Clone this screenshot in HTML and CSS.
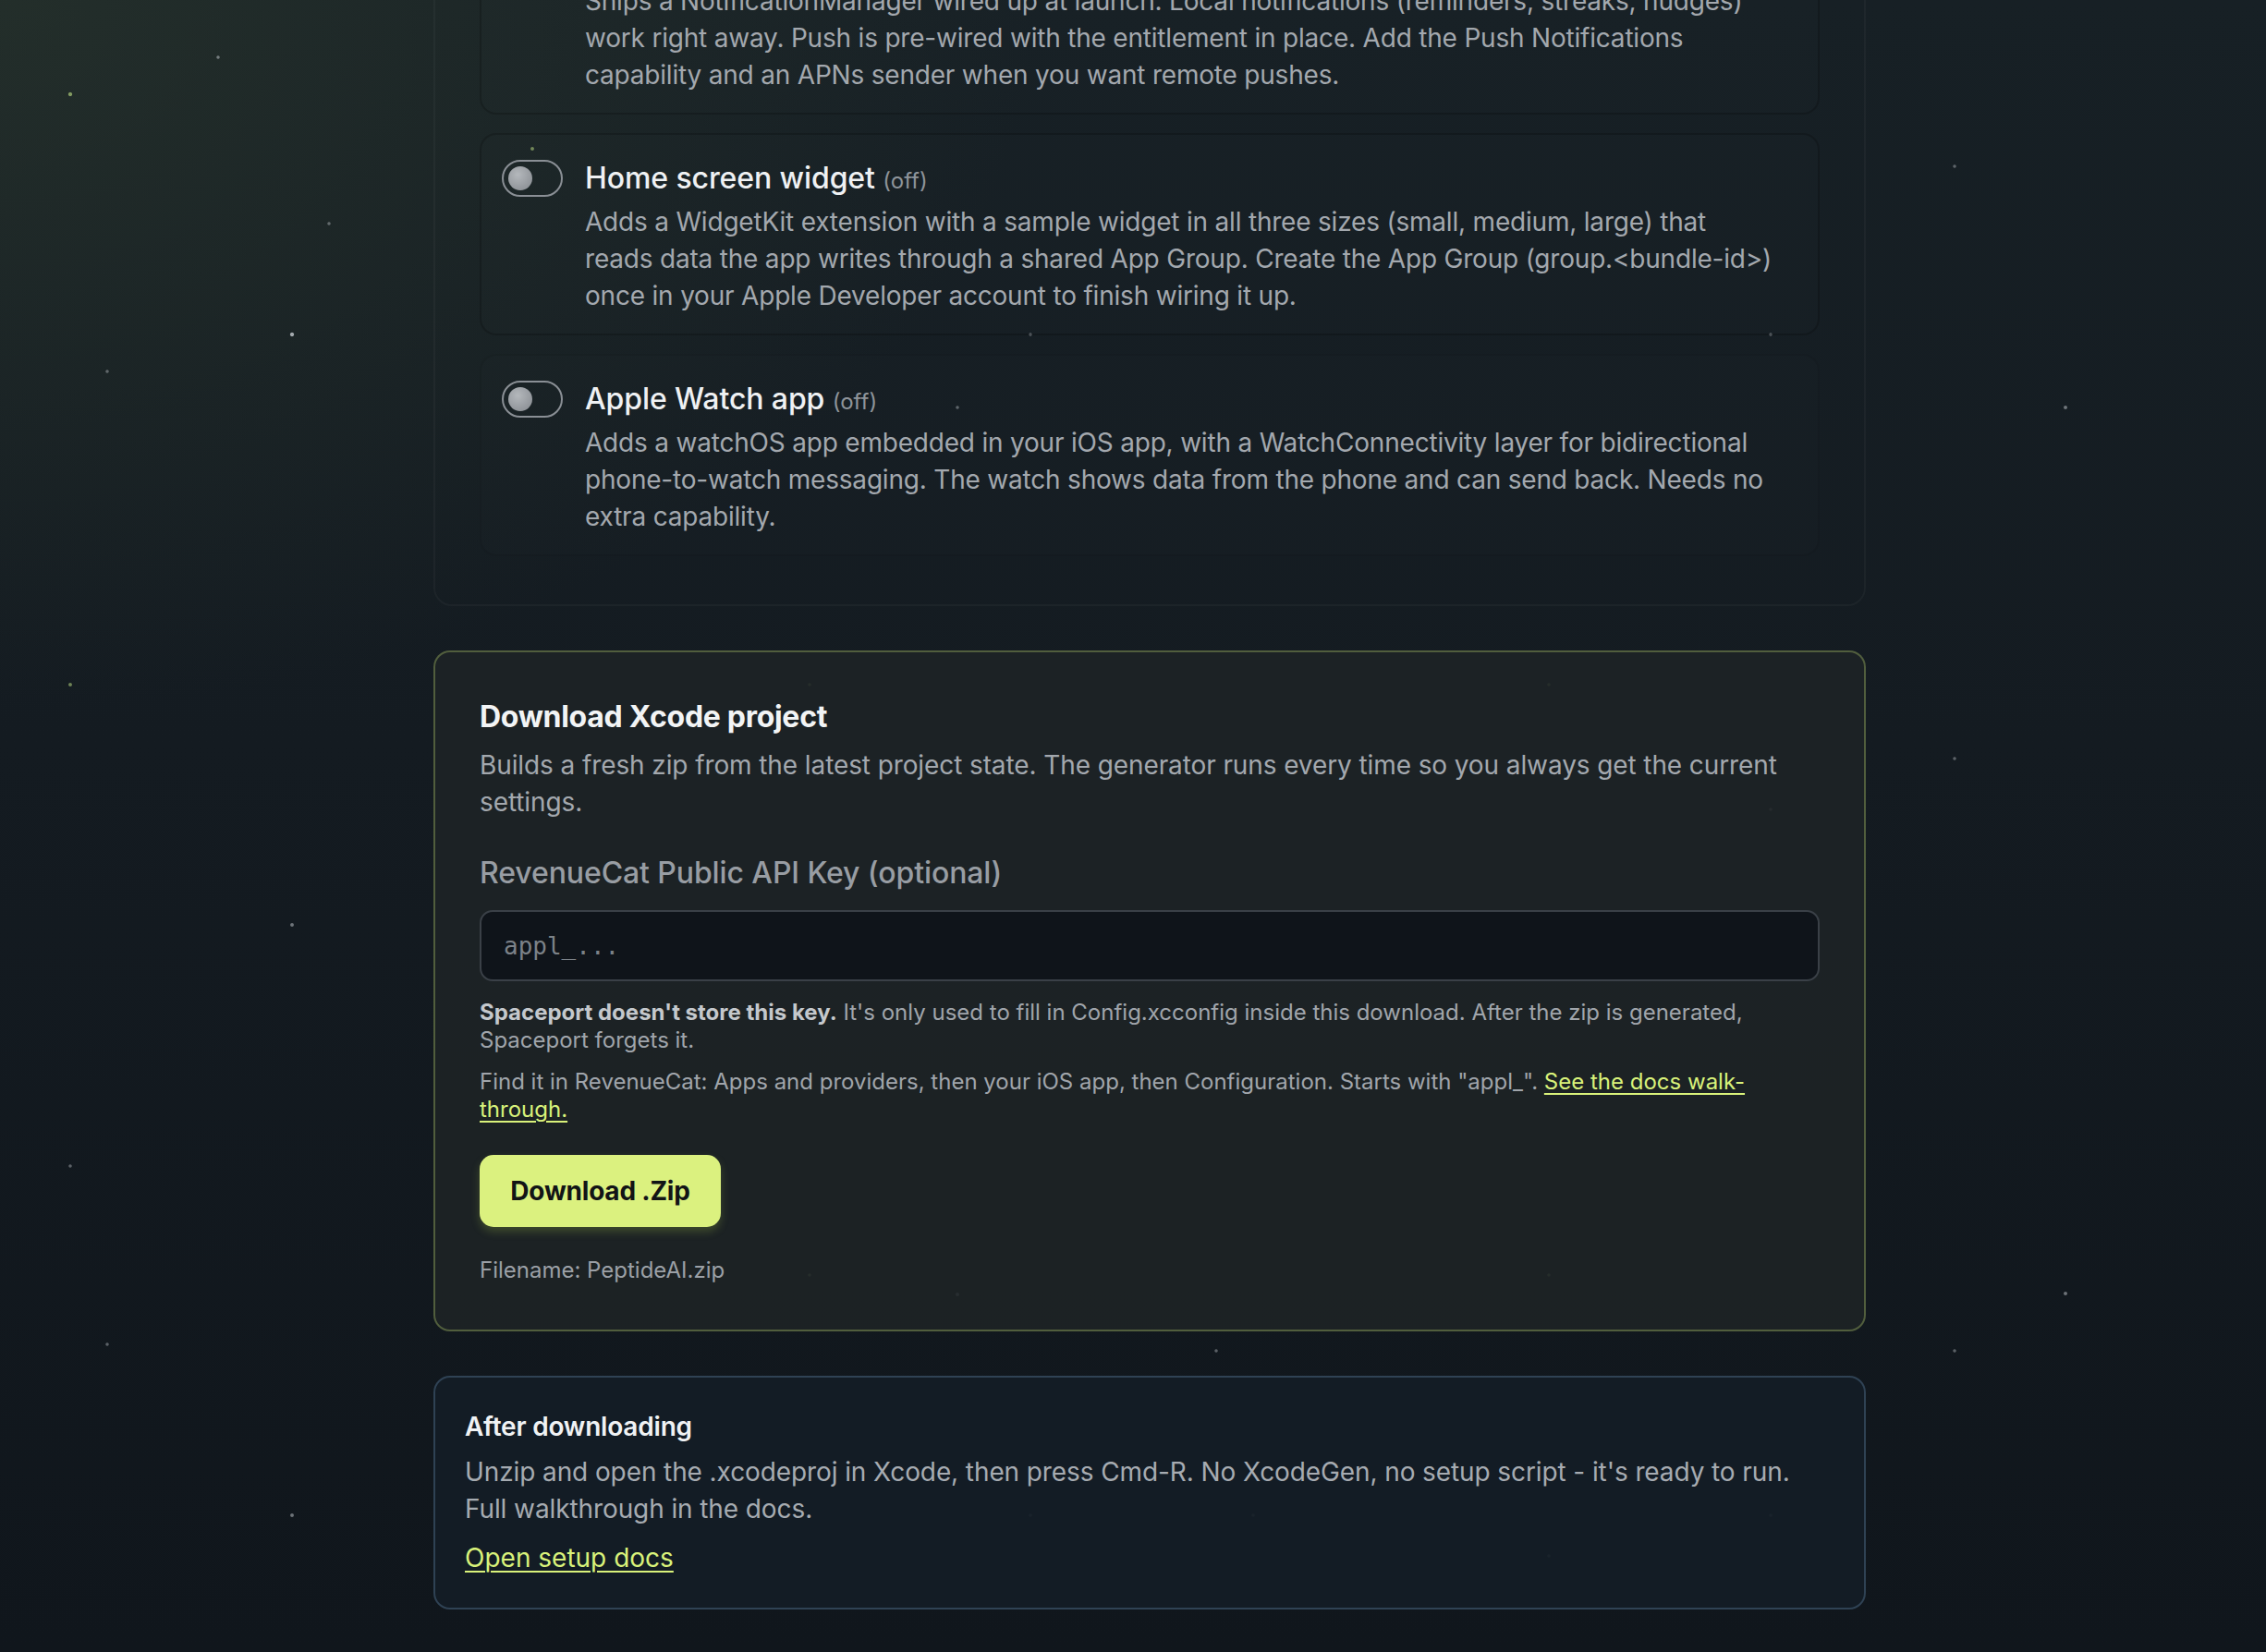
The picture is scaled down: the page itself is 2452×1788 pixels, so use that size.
FILE: index.html
```html
<!DOCTYPE html>
<html lang="en">
<head>
<meta charset="utf-8">
<title>Spaceport – Download</title>
<link rel="stylesheet" href="styles.css">
</head>
<body>
<main class="page">
  <section class="features">
    <div class="feature">
      <span class="toggle toggle-on"><span class="knob"></span></span>
      <div class="feature-body">
        <div class="feature-title">Notifications <span class="state">(on)</span></div>
        <p class="feature-desc">Ships a NotificationManager wired up at launch. Local notifications (reminders, streaks, nudges) work right away. Push is pre-wired with the entitlement in place. Add the Push Notifications capability and an APNs sender when you want remote pushes.</p>
      </div>
    </div>
    <div class="feature">
      <span class="toggle"><span class="knob"></span></span>
      <div class="feature-body">
        <div class="feature-title">Home screen widget <span class="state">(off)</span></div>
        <p class="feature-desc">Adds a WidgetKit extension with a sample widget in all three sizes (small, medium, large) that reads data the app writes through a shared App Group. Create the App Group (group.&lt;bundle-id&gt;) once in your Apple Developer account to finish wiring it up.</p>
      </div>
    </div>
    <div class="feature feature-plain">
      <span class="toggle"><span class="knob"></span></span>
      <div class="feature-body">
        <div class="feature-title">Apple Watch app <span class="state">(off)</span></div>
        <p class="feature-desc">Adds a watchOS app embedded in your iOS app, with a WatchConnectivity layer for bidirectional phone-to-watch messaging. The watch shows data from the phone and can send back. Needs no extra capability.</p>
      </div>
    </div>
  </section>

  <section class="download">
    <h2 class="download-title">Download Xcode project</h2>
    <p class="download-desc">Builds a fresh zip from the latest project state. The generator runs every time so you always get the current settings.</p>
    <label class="field-label" for="rc-key">RevenueCat Public API Key (optional)</label>
    <input class="field-input" id="rc-key" type="text" placeholder="appl_...">
    <p class="note"><strong>Spaceport doesn't store this key.</strong> It's only used to fill in Config.xcconfig inside this download. After the zip is generated, Spaceport forgets it.</p>
    <p class="note note-second">Find it in RevenueCat: Apps and providers, then your iOS app, then Configuration. Starts with "appl_". <a class="link" href="#">See the docs walk-through.</a></p>
    <button class="btn-download" type="button">Download .Zip</button>
    <p class="filename">Filename: PeptideAI.zip</p>
  </section>

  <section class="after">
    <h3 class="after-title">After downloading</h3>
    <p class="after-text">Unzip and open the .xcodeproj in Xcode, then press Cmd-R. No XcodeGen, no setup script - it's ready to run. Full walkthrough in the docs.</p>
    <a class="link after-link" href="#">Open setup docs</a>
  </section>
</main>
</body>
</html>
```

FILE: styles.css
```css
* { box-sizing: border-box; }

html, body {
  margin: 0;
  padding: 0;
  height: 100%;
}

body {
  overflow: hidden;
  font-family: "Inter", "Noto Sans", sans-serif;
  color: #eef0f2;
  background:
    radial-gradient(circle, rgba(170,200,120,0.7) 0 1.6px, transparent 2.6px) 73px 99px / 6px 6px no-repeat,
    radial-gradient(circle, rgba(200,205,210,0.5) 0 1.2px, transparent 2.2px) 233px 59px / 6px 6px no-repeat,
    radial-gradient(circle, rgba(220,225,230,0.7) 0 1.6px, transparent 2.6px) 313px 359px / 6px 6px no-repeat,
    radial-gradient(circle, rgba(200,205,210,0.4) 0 1.2px, transparent 2.2px) 113px 399px / 6px 6px no-repeat,
    radial-gradient(circle, rgba(200,205,210,0.4) 0 1.2px, transparent 2.2px) 353px 239px / 6px 6px no-repeat,
    radial-gradient(circle, rgba(170,200,120,0.6) 0 1.4px, transparent 2.4px) 73px 738px / 6px 6px no-repeat,
    radial-gradient(circle, rgba(200,205,210,0.5) 0 1.4px, transparent 2.4px) 313px 998px / 6px 6px no-repeat,
    radial-gradient(circle, rgba(200,205,210,0.4) 0 1.2px, transparent 2.2px) 73px 1259px / 6px 6px no-repeat,
    radial-gradient(circle, rgba(200,205,210,0.5) 0 1.4px, transparent 2.4px) 313px 1637px / 6px 6px no-repeat,
    radial-gradient(circle, rgba(200,205,210,0.4) 0 1.2px, transparent 2.2px) 113px 1452px / 6px 6px no-repeat,
    radial-gradient(circle, rgba(200,205,210,0.4) 0 1.2px, transparent 2.2px) 2112px 177px / 6px 6px no-repeat,
    radial-gradient(circle, rgba(200,205,210,0.4) 0 1.2px, transparent 2.2px) 1913px 359px / 6px 6px no-repeat,
    radial-gradient(circle, rgba(200,205,210,0.5) 0 1.4px, transparent 2.4px) 2232px 438px / 6px 6px no-repeat,
    radial-gradient(circle, rgba(200,205,210,0.4) 0 1.2px, transparent 2.2px) 2112px 818px / 6px 6px no-repeat,
    radial-gradient(circle, rgba(200,205,210,0.4) 0 1.2px, transparent 2.2px) 1913px 873px / 6px 6px no-repeat,
    radial-gradient(circle, rgba(200,205,210,0.5) 0 1.4px, transparent 2.4px) 2232px 1397px / 6px 6px no-repeat,
    radial-gradient(circle, rgba(200,205,210,0.4) 0 1.2px, transparent 2.2px) 2112px 1459px / 6px 6px no-repeat,
    radial-gradient(circle, rgba(200,205,210,0.4) 0 1.2px, transparent 2.2px) 1913px 1637px / 6px 6px no-repeat,
    radial-gradient(circle, rgba(170,200,120,0.6) 0 1.4px, transparent 2.4px) 573px 158px / 6px 6px no-repeat,
    radial-gradient(circle, rgba(200,205,210,0.4) 0 1.2px, transparent 2.2px) 1112px 359px / 6px 6px no-repeat,
    radial-gradient(circle, rgba(200,205,210,0.4) 0 1.2px, transparent 2.2px) 1033px 438px / 6px 6px no-repeat,
    radial-gradient(circle, rgba(170,200,120,0.5) 0 1.2px, transparent 2.2px) 873px 738px / 6px 6px no-repeat,
    radial-gradient(circle, rgba(170,200,120,0.5) 0 1.2px, transparent 2.2px) 1673px 738px / 6px 6px no-repeat,
    radial-gradient(circle, rgba(170,200,120,0.5) 0 1.2px, transparent 2.2px) 873px 1377px / 6px 6px no-repeat,
    radial-gradient(circle, rgba(200,205,210,0.5) 0 1.4px, transparent 2.4px) 1033px 1398px / 6px 6px no-repeat,
    radial-gradient(circle, rgba(170,200,120,0.5) 0 1.2px, transparent 2.2px) 1673px 1377px / 6px 6px no-repeat,
    radial-gradient(circle, rgba(200,205,210,0.4) 0 1.2px, transparent 2.2px) 1313px 1459px / 6px 6px no-repeat,
    radial-gradient(circle, rgba(200,205,210,0.4) 0 1.2px, transparent 2.2px) 1112px 1637px / 6px 6px no-repeat,
    radial-gradient(circle, rgba(200,205,210,0.4) 0 1.2px, transparent 2.2px) 1673px 1681px / 6px 6px no-repeat,
    radial-gradient(circle, rgba(200,205,210,0.4) 0 1.2px, transparent 2.2px) 1353px 1637px / 6px 6px no-repeat,
    radial-gradient(ellipse 1600px 1100px at 0% 0%, rgba(52,66,50,0.42), rgba(52,66,50,0) 70%),
    linear-gradient(180deg, #172025 0%, #141b21 45%, #10161c 100%);
  background-color: #10161c;
}

.page {
  width: 1550px;
  margin: -145px 0 0 469px;
  display: flex;
  flex-direction: column;
  gap: 48px;
}

/* ---------- Feature toggles ---------- */
.features {
  border: 2px solid rgba(255, 255, 255, 0.035);
  border-radius: 20px;
  padding: 48px 48px 52px;
  display: flex;
  flex-direction: column;
  gap: 20px;
}

.feature {
  display: flex;
  align-items: flex-start;
  gap: 24px;
  padding: 27px 47px 21px 22px;
  border: 2px solid rgba(0, 0, 0, 0.2);
  border-radius: 18px;
  background: rgba(255, 255, 255, 0.006);
}

.feature-plain {
  border-color: rgba(0, 0, 0, 0.08);
}

.toggle {
  flex: none;
  width: 66px;
  height: 40px;
  border: 2.5px solid #8a8f95;
  border-radius: 20px;
  display: flex;
  align-items: center;
  padding: 0 5px;
}

.knob {
  width: 26px;
  height: 26px;
  border-radius: 50%;
  background: radial-gradient(circle at 40% 35%, #b4b8bc 0%, #979ba0 60%, #85898e 100%);
}

.toggle-on {
  border-color: #d6ef78;
  background: #d6ef78;
  justify-content: flex-end;
}

.toggle-on .knob {
  background: #1a1f22;
}

.feature-body {
  flex: 1;
  min-width: 0;
}

.feature-title {
  height: 40px;
  font-size: 32px;
  line-height: 40px;
  font-weight: 500;
  color: #eff1f3;
  letter-spacing: -0.1px;
  white-space: nowrap;
}

.state {
  font-size: 24px;
  line-height: 1;
  font-weight: 400;
  color: #8e949a;
  letter-spacing: 0;
}

.feature-desc {
  margin: 7px 0 0;
  font-size: 28px;
  line-height: 40px;
  color: #a3a8ae;
  letter-spacing: -0.2px;
}

/* ---------- Download card ---------- */
.download {
  border: 2px solid rgba(205, 235, 120, 0.3);
  border-radius: 18px;
  background: rgba(30, 35, 38, 0.88);
  padding: 50px 48px 49px;
  display: flex;
  flex-direction: column;
  align-items: flex-start;
}

.download-title {
  margin: 0;
  font-size: 32px;
  line-height: 40px;
  font-weight: 700;
  color: #f2f4f5;
  letter-spacing: -0.3px;
}

.download-desc {
  margin: 12px 0 0;
  font-size: 28px;
  line-height: 40px;
  color: #a3a8ae;
  letter-spacing: -0.1px;
}

.field-label {
  margin-top: 35px;
  font-size: 32px;
  line-height: 44px;
  font-weight: 500;
  color: #989da3;
  letter-spacing: -0.1px;
}

.field-input {
  margin-top: 18px;
  width: 100%;
  height: 77px;
  border: 2px solid #3a4047;
  border-radius: 14px;
  background: #0f141a;
  padding: 0 24px;
  font-family: "DejaVu Sans Mono", "Liberation Mono", monospace;
  font-size: 26px;
  color: #d0d4d8;
  outline: none;
}

.field-input::placeholder {
  color: #7c8288;
}

.note {
  margin: 19px 0 0;
  font-size: 24px;
  line-height: 30px;
  color: #a0a5ab;
  letter-spacing: 0;
}

.note strong {
  color: #c4c8cc;
  font-weight: 700;
}

.note-second {
  margin-top: 15px;
}

.link {
  color: #d9f27a;
  text-decoration: underline;
  text-decoration-thickness: 2px;
  text-underline-offset: 4px;
}

.btn-download {
  margin-top: 34px;
  width: 261px;
  height: 78px;
  border: none;
  border-radius: 15px;
  background: #dbf17f;
  color: #121416;
  font-family: "Inter", "Noto Sans", sans-serif;
  font-size: 28px;
  font-weight: 700;
  letter-spacing: -0.2px;
  box-shadow: 0 5px 10px rgba(150, 180, 70, 0.28);
  cursor: pointer;
}

.filename {
  margin: 32px 0 0;
  font-size: 24px;
  line-height: 30px;
  color: #9ba0a6;
}

/* ---------- After downloading ---------- */
.after {
  border: 2px solid #2f4254;
  border-radius: 18px;
  background: rgba(20, 29, 38, 0.92);
  padding: 35px 40px 34px 32px;
}

.after-title {
  margin: 0;
  font-size: 28px;
  line-height: 36px;
  font-weight: 600;
  color: #f0f2f4;
  letter-spacing: -0.2px;
}

.after-text {
  margin: 11px 0 0;
  font-size: 28px;
  line-height: 40px;
  color: #a6abb1;
  letter-spacing: -0.1px;
}

.after-link {
  display: inline-block;
  margin-top: 13px;
  font-size: 28px;
  line-height: 40px;
}
```
